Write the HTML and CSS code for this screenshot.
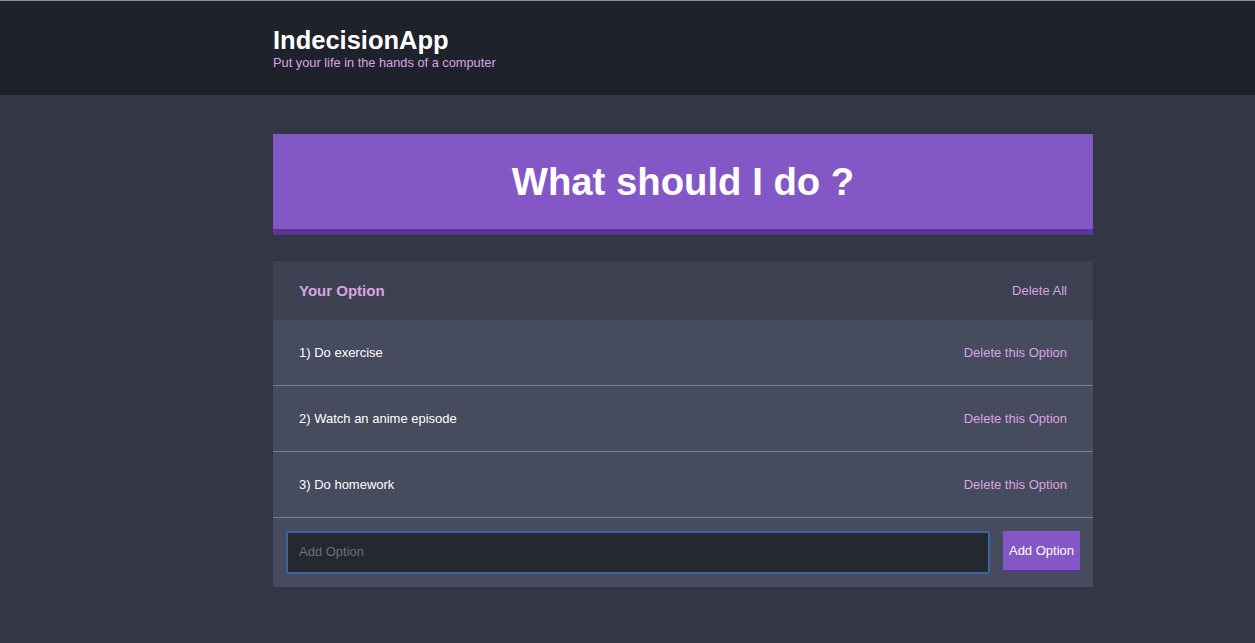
FILE: index.html
```html
<!DOCTYPE html>
<html>
<head>
<meta charset="utf-8">
<link rel="stylesheet" href="styles.css">
</head>
<body>
<header class="header">
  <div class="container">
    <h1 class="header__title">IndecisionApp</h1>
    <p class="header__subtitle">Put your life in the hands of a computer</p>
  </div>
</header>
<main class="container main">
  <button class="big-button">What should I do ?</button>
  <section class="widget">
    <div class="widget-header">
      <h3 class="widget-header__title">Your Option</h3>
      <button class="link-button">Delete All</button>
    </div>
    <div class="option">
      <p class="option__text">1) Do exercise</p>
      <button class="link-button">Delete this Option</button>
    </div>
    <div class="option">
      <p class="option__text">2) Watch an anime episode</p>
      <button class="link-button">Delete this Option</button>
    </div>
    <div class="option">
      <p class="option__text">3) Do homework</p>
      <button class="link-button">Delete this Option</button>
    </div>
    <form class="add-option">
      <input class="add-option__input" type="text" placeholder="Add Option">
      <button class="add-option__button" type="button">Add Option</button>
    </form>
  </section>
</main>
</body>
</html>
```
FILE: styles.css
```css
* { box-sizing: border-box; }
html, body { margin: 0; padding: 0; }
body {
  background: #333645;
  font-family: "Liberation Sans", Arial, sans-serif;
  color: #ffffff;
  height: 643px;
  overflow: hidden;
}
.container {
  width: 820px;
  margin-left: 273px;
}
.header {
  background: #20222b;
  border-top: 1px solid #8a8e9e;
  height: 95px;
  padding-top: 25px;
}
.header__title {
  margin: 0;
  font-size: 25.5px;
  line-height: 29px;
  font-weight: bold;
  color: #ffffff;
}
.header__subtitle {
  margin: 0;
  font-size: 12.8px;
  line-height: 15px;
  color: #d7a4e2;
}
.main { padding-top: 39px; }
.big-button {
  display: block;
  width: 100%;
  height: 101px;
  background: #8357c5;
  border: none;
  border-bottom: 6px solid #5b3496;
  color: #ffffff;
  font-family: inherit;
  font-size: 38.3px;
  font-weight: bold;
  padding: 0;
  margin: 0 0 26px;
}
.widget { background: #464b5e; }
.widget-header {
  background: #3d4151;
  height: 59px;
  display: flex;
  align-items: center;
  justify-content: space-between;
  padding: 0 26px;
}
.widget-header__title {
  margin: 0;
  font-size: 15px;
  font-weight: bold;
  color: #dba3e0;
}
.link-button {
  background: none;
  border: none;
  padding: 0;
  font-family: inherit;
  font-size: 13px;
  color: #dba3e0;
}
.option {
  height: 66px;
  display: flex;
  align-items: center;
  justify-content: space-between;
  padding: 0 26px;
  border-bottom: 1px solid #797e94;
}
.option__text {
  margin: 0;
  font-size: 13px;
  color: #ffffff;
}
.add-option {
  display: flex;
  gap: 13px;
  padding: 13px;
  margin: 0;
}
.add-option__input {
  flex: 1;
  height: 43px;
  background: #262830;
  border: 2px solid #3b63a6;
  border-radius: 2px;
  color: #ffffff;
  font-family: inherit;
  font-size: 13px;
  padding: 0 11px 3px;
  outline: none;
}
.add-option__input::placeholder { color: #6c6f7b; }
.add-option__button {
  width: 77px;
  height: 41px;
  background: #8357c5;
  border: none;
  border-bottom: 2px solid #5b3496;
  color: #ffffff;
  font-family: inherit;
  font-size: 13px;
  padding: 0;
}
```
